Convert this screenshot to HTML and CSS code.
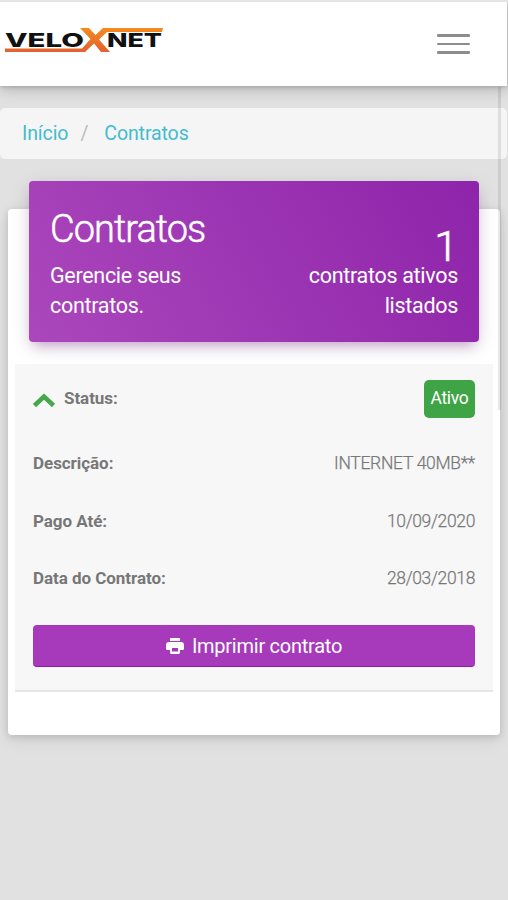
FILE: index.html
```html
<!DOCTYPE html>
<html lang="pt-BR">
<head>
<meta charset="utf-8">
<title>Contratos</title>
<link rel="stylesheet" href="styles.css">
</head>
<body>
<header class="navbar">
  <svg class="logo" width="164" height="34" viewBox="0 0 164 34" role="img">
    <defs>
      <linearGradient id="flame" x1="0" y1="0" x2="0" y2="1">
        <stop offset="0" stop-color="#f58a1f"/>
        <stop offset="1" stop-color="#e2602f"/>
      </linearGradient>
    </defs>
    <text class="logo-text" x="5" y="24.7" textLength="79" lengthAdjust="spacingAndGlyphs">VELO</text>
    <text class="logo-text" x="107" y="24.7" textLength="55" lengthAdjust="spacingAndGlyphs">NET</text>
    <path fill="url(#flame)" d="M80 6H89L95.500 13L103 6H163L162 10H107L99 17.500L110 30H101L94 21.500L85 30H5V26.500H82L90.500 17Z"/>
  </svg>
  <button class="menu" aria-label="Menu"><span></span><span></span><span></span></button>
</header>
<nav class="breadcrumb"><a>Início</a><span class="slash">/</span><a>Contratos</a></nav>
<main class="card">
  <section class="card-header">
    <div class="heading">
      <h1>Contratos</h1>
      <p>Gerencie seus contratos.</p>
    </div>
    <div class="summary">
      <strong>1</strong>
      <p>contratos ativos listados</p>
    </div>
  </section>
  <section class="contract">
    <div class="row status">
      <b><svg class="chevron" width="23" height="15" viewBox="0 0 23 15"><path d="M1.500 12.500L11 3.500L20.500 12.500" fill="none" stroke="#43a94b" stroke-width="4.500"/></svg><span>Status:</span></b>
      <span class="badge">Ativo</span>
    </div>
    <div class="row"><b>Descrição:</b><span class="value plan">INTERNET 40MB**</span></div>
    <div class="row"><b>Pago Até:</b><span class="value">10/09/2020</span></div>
    <div class="row"><b>Data do Contrato:</b><span class="value">28/03/2018</span></div>
    <button class="print">
      <svg width="18" height="16" viewBox="0 0 18 16"><path fill="#fff" fill-rule="evenodd" d="M4 0H14V3H4ZM3 4H15Q18 4 18 7V10.500Q18 12 16.500 12H14V14.500Q14 16 12.500 16H5.500Q4 16 4 14.500V12H1.500Q0 12 0 10.500V7Q0 4 3 4ZM6 10V13.500H12V10Z"/></svg>
      <span>Imprimir contrato</span>
    </button>
  </section>
</main>
<div class="scrollbar"></div>
</body>
</html>
```
FILE: styles.css
```css
* { box-sizing: border-box; }
body {
  margin: 0;
  height: 900px;
  overflow: hidden;
  border-top: 2px solid #e5e5e5;
  background: #e1e1e1;
  font-family: Roboto, sans-serif;
  color: #777;
}
h1, p { margin: 0; font-weight: 400; }
button { border: 0; font: inherit; }
.navbar {
  position: relative;
  height: 84px;
  margin-right: 1px;
  padding: 20px 37px 0 0;
  display: flex;
  justify-content: space-between;
  align-items: flex-start;
  background: #fff;
  box-shadow: 0 3px 14px rgba(0, 0, 0, .22), 0 1px 4px rgba(0, 0, 0, .16);
}
.logo-text {
  font: 800 19px Inter, sans-serif;
  fill: #111;
}
.menu {
  width: 33px;
  margin-top: 12px;
  padding: 0;
  background: none;
  display: grid;
  gap: 6px;
}
.menu span { height: 2.500px; background: #8d8d8d; border-radius: 1px; }
.breadcrumb {
  height: 51px;
  margin: 22px 1px 0 0;
  padding-left: 22px;
  display: flex;
  align-items: center;
  background: #f5f5f5;
  border-radius: 5px;
  font-size: 19.5px;
  letter-spacing: -.1px;
  color: #42bccf;
}
.slash { margin: 0 16px 0 12px; color: #bbb; }
.card {
  height: 526px;
  margin: 50px 8px 0;
  padding: 0 7px;
  background: #fff;
  border-radius: 4px;
  box-shadow: 0 2px 7px rgba(0, 0, 0, .14), 0 5px 18px rgba(0, 0, 0, .08);
}
.card-header {
  position: relative;
  top: -28px;
  height: 161px;
  margin: 0 14px;
  padding: 26px 21px 0;
  display: flex;
  justify-content: space-between;
  color: #fff;
  border-radius: 4px;
  background: linear-gradient(60deg, #ab47bc, #8e24aa);
  box-shadow: 0 5px 20px rgba(0, 0, 0, .12), 0 7px 12px -5px rgba(156, 39, 176, .4);
}
.card-header p { font-size: 21.500px; line-height: 30px; letter-spacing: -.3px; }
.heading { width: 170px; }
.heading h1 {
  height: 54px;
  font-size: 38px;
  line-height: 44px;
  font-weight: 300;
  letter-spacing: -.95px;
  -webkit-text-stroke: .5px #fff;
}
.summary { width: 170px; text-align: right; }
.summary strong {
  display: block;
  height: 54px;
  padding-top: 24px;
  font-size: 43px;
  line-height: 30px;
  font-weight: 300;
  -webkit-text-stroke: .7px #fff;
}
.contract {
  height: 328px;
  margin-top: -6px;
  padding: 6px 18px 0;
  background: #f7f7f7;
  border-bottom: 2px solid #e6e6e6;
}
.row {
  height: 57.700px;
  display: flex;
  justify-content: space-between;
  align-items: center;
  font-size: 17.500px;
}
.row b { display: flex; align-items: center; font-size: 17px; letter-spacing: -.05px; }
.value { font-weight: 300; letter-spacing: -.35px; -webkit-text-stroke: .25px #777; }
.plan { letter-spacing: -.3px; }
.status { height: 58px; margin-bottom: 6px; }
.status b { padding-bottom: 2px; }
.chevron { margin: 4px 8px 0 0; }
.badge {
  width: 51px;
  height: 38px;
  border-radius: 5px;
  background: #3fa445;
  color: #fff;
  line-height: 37px;
  text-align: center;
  letter-spacing: -.3px;
}
.print {
  width: 100%;
  height: 42px;
  margin-top: 18px;
  padding: 0;
  display: flex;
  justify-content: center;
  align-items: center;
  gap: 8px;
  border-radius: 4px;
  background: #a63abb;
  border-bottom: 1px solid #9217ad;
  color: #fff;
  font-size: 20px;
  letter-spacing: -.25px;
}
.scrollbar {
  position: absolute;
  top: 87px;
  right: 7px;
  width: 3px;
  height: 323px;
  background: rgba(0, 0, 0, .09);
}
```
